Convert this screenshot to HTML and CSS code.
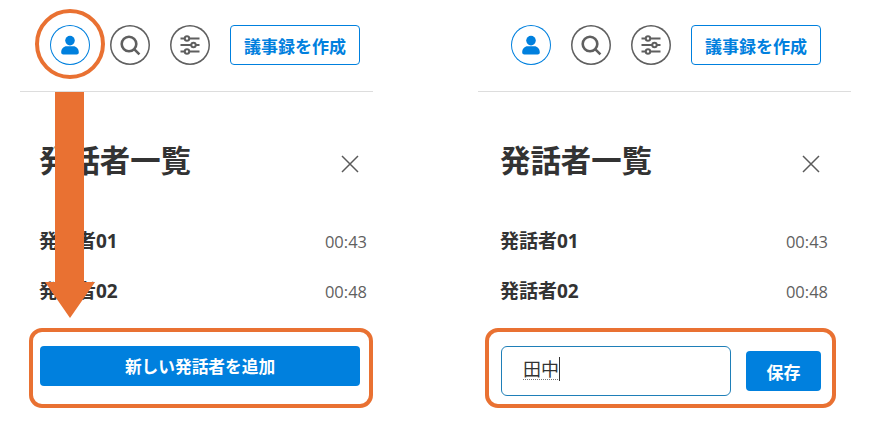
FILE: index.html
```html
<!DOCTYPE html>
<html lang="ja">
  <head>
    <meta charset="UTF-8" />
    <meta name="viewport" content="width=device-width, initial-scale=1.0" />
    <title>発話者一覧</title>
    <link rel="stylesheet" href="styles.css">
  </head>
  <body>
    <main class="page">
      <section class="panel panel-left">
        <header class="toolbar">
          <button class="icon-btn icon-btn-active">
            <svg viewBox="0 0 24 24" width="24" height="24"><circle cx="12" cy="7.6" r="4.8" fill="#0080de"/><path d="M3.2 19.5c0-3.9 2.6-6.2 5.4-6.2h6.8c2.8 0 5.4 2.3 5.4 6.2 0 1.3-.9 2-2.1 2H5.300c-1.200 0-2.100-.7-2.100-2z" fill="#0080de"/></svg>
          </button>
          <button class="icon-btn">
            <svg viewBox="0 0 24 24" width="24" height="24"><circle cx="11" cy="11" r="7.300" fill="none" stroke="#5f5f5f" stroke-width="2.600"/><path d="M16.400 16.400l5 5" stroke="#5f5f5f" stroke-width="2.600"/></svg>
          </button>
          <button class="icon-btn">
            <svg viewBox="0 0 24 24" width="24" height="24" fill="none" stroke="#5f5f5f" stroke-width="2"><path d="M2.500 5.500h19M2.500 12h19M2.500 18.500h19"/><circle cx="9" cy="5.500" r="2.200" fill="#fff"/><circle cx="15.500" cy="12" r="2.200" fill="#fff"/><circle cx="9" cy="18.500" r="2.200" fill="#fff"/></svg>
          </button>
          <button class="create-btn">議事録を作成</button>
        </header>
        <div class="ring"></div>
        <svg class="arrow" viewBox="0 0 52 226" width="52" height="226"><polygon points="11,0 40,0 40,190 51,190 26,226 1,190 11,190" fill="#e97132"/></svg>
        <div class="list-head">
          <h2>発話者一覧</h2>
          <svg class="close" viewBox="0 0 18 18" width="18" height="18"><path d="M1 1l16 16M17 1L1 17" stroke="#5a5a5a" stroke-width="1.500"/></svg>
        </div>
        <ul class="speakers">
          <li><span class="name">発話者01</span><span class="time">00:43</span></li>
          <li><span class="name">発話者02</span><span class="time">00:48</span></li>
        </ul>
        <footer class="panel-foot">
          <div class="callout callout-left"></div>
          <button class="add-btn">新しい発話者を追加</button>
        </footer>
      </section>

      <section class="panel panel-right">
        <header class="toolbar">
          <button class="icon-btn icon-btn-active">
            <svg viewBox="0 0 24 24" width="24" height="24"><circle cx="12" cy="7.6" r="4.8" fill="#0080de"/><path d="M3.2 19.5c0-3.9 2.6-6.2 5.4-6.2h6.8c2.8 0 5.4 2.3 5.4 6.2 0 1.3-.9 2-2.1 2H5.300c-1.200 0-2.100-.7-2.100-2z" fill="#0080de"/></svg>
          </button>
          <button class="icon-btn">
            <svg viewBox="0 0 24 24" width="24" height="24"><circle cx="11" cy="11" r="7.300" fill="none" stroke="#5f5f5f" stroke-width="2.600"/><path d="M16.400 16.400l5 5" stroke="#5f5f5f" stroke-width="2.600"/></svg>
          </button>
          <button class="icon-btn">
            <svg viewBox="0 0 24 24" width="24" height="24" fill="none" stroke="#5f5f5f" stroke-width="2"><path d="M2.500 5.500h19M2.500 12h19M2.500 18.500h19"/><circle cx="9" cy="5.500" r="2.200" fill="#fff"/><circle cx="15.500" cy="12" r="2.200" fill="#fff"/><circle cx="9" cy="18.500" r="2.200" fill="#fff"/></svg>
          </button>
          <button class="create-btn">議事録を作成</button>
        </header>
        <div class="list-head">
          <h2>発話者一覧</h2>
          <svg class="close" viewBox="0 0 18 18" width="18" height="18"><path d="M1 1l16 16M17 1L1 17" stroke="#5a5a5a" stroke-width="1.500"/></svg>
        </div>
        <ul class="speakers">
          <li><span class="name">発話者01</span><span class="time">00:43</span></li>
          <li><span class="name">発話者02</span><span class="time">00:48</span></li>
        </ul>
        <footer class="panel-foot panel-foot-edit">
          <div class="callout callout-right"></div>
          <div class="name-input"><span class="composing">田中</span></div>
          <button class="save-btn">保存</button>
        </footer>
      </section>
    </main>
  </body>
</html>
```

FILE: styles.css
```css
:root {
  --blue: #0080de;
  --orange: #e97132;
  --ink: #333;
  --muted: #5f5f5f;
}
* {
  box-sizing: border-box;
}
body {
  margin: 0;
  background: #fff;
  color: var(--ink);
  font-family: "Open Sans", "Noto Sans CJK JP", sans-serif;
}
button {
  font-family: inherit;
  cursor: pointer;
}
.page {
  display: flex;
  gap: 105px;
  padding-left: 20px;
  height: 441px;
  overflow: hidden;
}
.panel {
  position: relative;
  width: 353px;
  padding: 0 13px 0 20px;
}
.panel-right {
  width: 373px;
  padding: 0 30px 0 23px;
}

.toolbar {
  display: flex;
  align-items: center;
  gap: 20px;
  height: 92px;
  margin: 0 -30px 0 -23px;
  padding: 25px 0 26px 33px;
  border-bottom: 1px solid #ddd;
}
.panel-left .toolbar {
  margin: 0 -13px 0 -20px;
  padding-left: 30px;
}
.icon-btn {
  display: flex;
  align-items: center;
  justify-content: center;
  width: 40px;
  height: 40px;
  padding: 0;
  background: #fff;
  border: 0;
  border-radius: 50%;
  box-shadow: inset 0 0 0 1.500px var(--muted);
}
.icon-btn-active {
  box-shadow: inset 0 0 0 1px var(--blue);
}
.create-btn {
  width: 130px;
  height: 40px;
  padding: 0;
  background: #fff;
  color: var(--blue);
  border: 1px solid var(--blue);
  border-radius: 4px;
  font-size: 17px;
  font-weight: 700;
}
.ring {
  position: absolute;
  left: 15px;
  top: 9px;
  width: 70px;
  height: 70px;
  border: 4px solid var(--orange);
  border-radius: 50%;
}
.arrow {
  position: absolute;
  left: 24px;
  top: 92px;
  z-index: 2;
}

.list-head {
  display: flex;
  align-items: center;
  justify-content: space-between;
  height: 50px;
  margin-top: 44px;
}
.list-head h2 {
  margin: 0 0 0 -1px;
  font-size: 30.400px;
  line-height: 50px;
  font-weight: 700;
}
.close {
  margin: 6px 1px 0 0;
}

.speakers {
  list-style: none;
  margin: 29px -7px 0 0;
  padding: 0;
}
.speakers li {
  display: flex;
  align-items: center;
  justify-content: space-between;
  height: 50px;
}
.name {
  margin-left: -1px;
  font-size: 19px;
  font-weight: 700;
}
.time {
  margin-top: 3px;
  font-size: 16.500px;
  color: var(--muted);
}

.panel-foot {
  position: relative;
  height: 80px;
  margin-top: 13px;
  padding-top: 18px;
}
.panel-foot-edit {
  display: flex;
  align-items: flex-start;
  gap: 15px;
}
.callout {
  position: absolute;
  top: 0;
  bottom: 0;
  border: 4px solid var(--orange);
  border-radius: 13px;
  pointer-events: none;
}
.callout-left {
  left: -11px;
  right: -13px;
}
.callout-right {
  left: -16px;
  right: -15px;
}
.add-btn {
  display: block;
  width: 100%;
  height: 40px;
  background: var(--blue);
  color: #fff;
  border: 0;
  border-radius: 4px;
  font-size: 16.700px;
  font-weight: 700;
}
.name-input {
  display: flex;
  align-items: center;
  width: 230px;
  height: 50px;
  padding: 0 0 4px 21px;
  border: 1px solid #1f7fb8;
  border-radius: 6px;
  font-size: 18px;
}
.composing {
  border-right: 1px solid #333;
  line-height: 24px;
  text-decoration: underline dotted #777 1px;
  text-underline-offset: 3px;
}
.save-btn {
  width: 75px;
  height: 40px;
  margin-top: 5px;
  background: var(--blue);
  color: #fff;
  border: 0;
  border-radius: 4px;
  font-size: 17px;
  font-weight: 700;
}
```
